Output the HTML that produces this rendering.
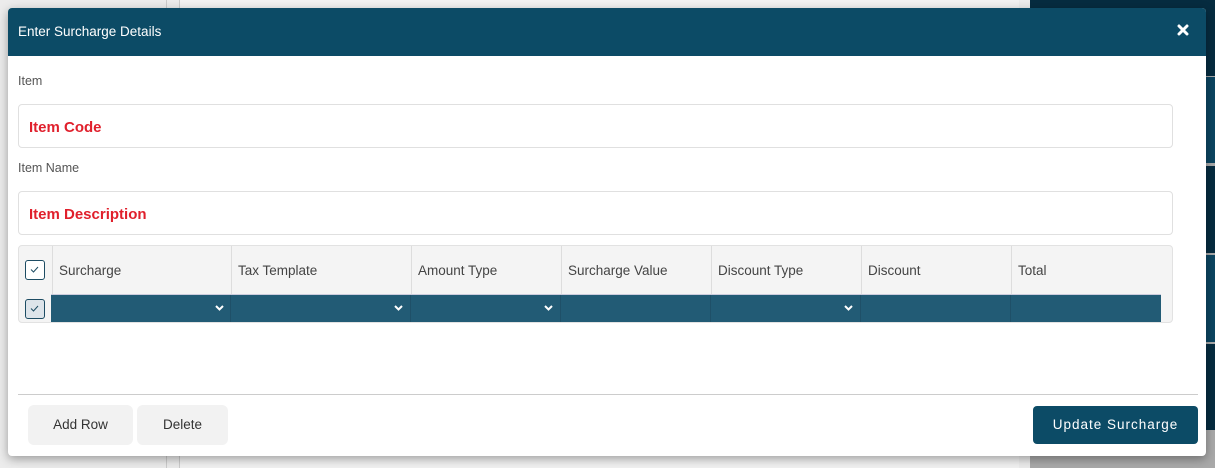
<!DOCTYPE html>
<html><head><style>
*{box-sizing:border-box;margin:0;padding:0}
body{width:1215px;height:468px;overflow:hidden;background:#a9a9a9;font-family:"Liberation Sans",sans-serif;position:relative}
.bgl{position:absolute;left:0;top:0;width:1030px;height:468px;background:#ececec}
.bgw{position:absolute;left:179px;top:0;width:840px;height:468px;background:#f2f2f2;border-left:1px solid #ccc}
.bgv{position:absolute;left:166px;top:0;width:1px;height:468px;background:#ccc}
.rp{position:absolute;left:1030px;width:185px}
.modal{position:absolute;left:8px;top:8px;width:1198px;height:448px;background:#fff;border-radius:4px;overflow:hidden;box-shadow:0 3px 10px rgba(0,0,0,.35)}
.hd{height:48px;background:#0c4b66;color:#fff;font-size:13.5px;padding:16px 10px;position:relative}
.x{position:absolute;right:17px;top:16px}
.lbl{position:absolute;left:10px;font-size:12.5px;color:#555}
.inp{position:absolute;left:10px;width:1155px;height:44px;border:1px solid #e0e0e0;border-radius:4px;color:#e0202c;font-weight:bold;font-size:15px;padding:14px 10px}
.tbl{position:absolute;left:10px;top:237px;width:1155px;height:78px;background:#f4f4f4;border:1px solid #e2e2e2;border-radius:4px;overflow:hidden}
.c{position:absolute;top:0;height:48px;border-left:1px solid #ddd;font-size:13.5px;color:#444;padding:17px 6px}
.row{position:absolute;left:32px;top:48px;width:1110px;height:28px;background:#225b75;border-top:1px solid #ccd}
.cb{position:absolute;left:6px;width:20px;height:20px;border:1.5px solid #1d4c63;border-radius:3px;background:#fff}
.cb svg{position:absolute;left:4px;top:5px}
.rc{position:absolute;top:0;height:27px;border-left:1px solid #1f5068}
.ch{position:absolute;right:7px;top:10px}
.sep{position:absolute;left:10px;top:386px;width:1180px;height:1px;background:#ccc}
.btn{position:absolute;top:397px;height:40px;background:#f2f2f2;border-radius:6px;font-size:13.5px;color:#333;text-align:center;line-height:40px}
.up{position:absolute;left:1025px;top:398px;width:165px;height:38px;background:#0c4b66;border-radius:4px;color:#fff;font-size:13.5px;letter-spacing:1px;text-align:center;line-height:38px}
</style></head><body>
<div class="bgl"></div><div class="bgv"></div><div class="bgw"></div>
<div class="rp" style="top:0;height:76px;background:#062c40"></div>
<div class="rp" style="top:77px;height:86px;background:#0c4561"></div>
<div class="rp" style="top:166px;height:87px;background:#062c40"></div>
<div class="rp" style="top:255px;height:87px;background:#0c4561"></div>
<div class="rp" style="top:344px;height:86px;background:#062c40"></div>
<div class="modal">
<div class="hd">Enter Surcharge Details<svg class="x" width="12" height="12" viewBox="0 0 12 12"><path d="M2 2L10 10M10 2L2 10" stroke="#fff" stroke-width="3" stroke-linecap="round"/></svg></div>
<div class="lbl" style="top:66px">Item</div>
<div class="inp" style="top:96px">Item Code</div>
<div class="lbl" style="top:153px">Item Name</div>
<div class="inp" style="top:183px">Item Description</div>
<div class="tbl">
<div class="cb" style="top:14px"><svg width="9" height="7" viewBox="0 0 9 7"><path d="M1 3.5L3.5 6L8 1" stroke="#1d4c63" stroke-width="1" fill="none"/></svg></div>
<div class="c" style="left:33px;width:180px">Surcharge</div>
<div class="c" style="left:212px;width:180px">Tax Template</div>
<div class="c" style="left:392px;width:150px">Amount Type</div>
<div class="c" style="left:542px;width:150px">Surcharge Value</div>
<div class="c" style="left:692px;width:150px">Discount Type</div>
<div class="c" style="left:842px;width:150px">Discount</div>
<div class="c" style="left:992px;width:150px">Total</div>
<div class="cb" style="top:53px;background:#dde4ea"><svg width="9" height="7" viewBox="0 0 9 7"><path d="M1 3.5L3.5 6L8 1" stroke="#1d4c63" stroke-width="1" fill="none"/></svg></div>
<div class="row">
<div class="rc" style="left:0;width:180px;border:none"><svg class="ch" width="9" height="6" viewBox="0 0 9 6"><path d="M1 1L4.5 4.5L8 1" stroke="#fff" stroke-width="2" fill="none"/></svg></div>
<div class="rc" style="left:179px;width:180px"><svg class="ch" width="9" height="6" viewBox="0 0 9 6"><path d="M1 1L4.5 4.5L8 1" stroke="#fff" stroke-width="2" fill="none"/></svg></div>
<div class="rc" style="left:359px;width:150px"><svg class="ch" width="9" height="6" viewBox="0 0 9 6"><path d="M1 1L4.5 4.5L8 1" stroke="#fff" stroke-width="2" fill="none"/></svg></div>
<div class="rc" style="left:509px;width:150px"></div>
<div class="rc" style="left:659px;width:150px"><svg class="ch" width="9" height="6" viewBox="0 0 9 6"><path d="M1 1L4.5 4.5L8 1" stroke="#fff" stroke-width="2" fill="none"/></svg></div>
<div class="rc" style="left:809px;width:150px"></div>
<div class="rc" style="left:959px;width:151px"></div>
</div>
</div>
<div class="sep"></div>
<div class="btn" style="left:20px;width:105px">Add Row</div>
<div class="btn" style="left:129px;width:91px">Delete</div>
<div class="up">Update Surcharge</div>
</div>
</body></html>
